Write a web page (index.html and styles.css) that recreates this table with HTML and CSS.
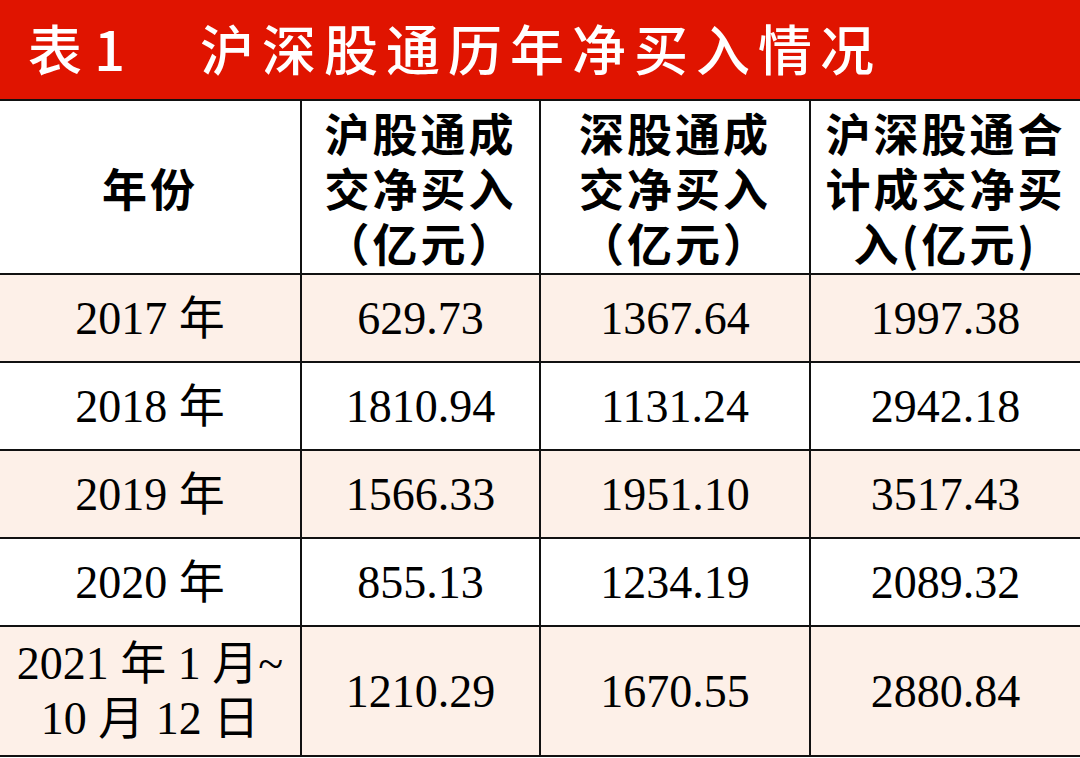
FILE: index.html
```html
<!DOCTYPE html>
<html lang="zh-CN">
<head>
    <meta charset="UTF-8">
    <meta name="viewport" content="width=device-width, initial-scale=1.0">
    <title>沪深股通历年净买入情况</title>
    <link rel="stylesheet" href="styles.css">
</head>
<body>
    <!-- Title bar -->
    <div class="title-bar">
        <span class="table-no">表 1</span>
        <span class="table-name">沪深股通历年净买入情况</span>
    </div>

    <table class="data-table">
        <colgroup>
            <col class="col-year">
            <col class="col-sh">
            <col class="col-sz">
            <col class="col-total">
        </colgroup>
        <thead>
            <tr>
                <th>年份</th>
                <th>沪股通成<br>交净买入<br>（亿元）</th>
                <th>深股通成<br>交净买入<br>（亿元）</th>
                <th>沪深股通合<br>计成交净买<br>入(亿元)</th>
            </tr>
        </thead>
        <tbody>
            <tr class="shade">
                <td>2017 年</td>
                <td>629.73</td>
                <td>1367.64</td>
                <td>1997.38</td>
            </tr>
            <tr>
                <td>2018 年</td>
                <td>1810.94</td>
                <td>1131.24</td>
                <td>2942.18</td>
            </tr>
            <tr class="shade">
                <td>2019 年</td>
                <td>1566.33</td>
                <td>1951.10</td>
                <td>3517.43</td>
            </tr>
            <tr>
                <td>2020 年</td>
                <td>855.13</td>
                <td>1234.19</td>
                <td>2089.32</td>
            </tr>
            <tr class="shade last">
                <td>2021 年 1 月~<br>10 月 12 日</td>
                <td>1210.29</td>
                <td>1670.55</td>
                <td>2880.84</td>
            </tr>
        </tbody>
    </table>
</body>
</html>
```

FILE: styles.css
```css
body {
    margin: 0;
    padding: 0;
    width: 1080px;
    background: #fff;
    overflow: hidden;
}

.title-bar {
    height: 99px;
    background: #e01400;
    color: #fff;
    display: flex;
    align-items: center;
    padding-left: 28px;
    padding-bottom: 3px;
    box-sizing: border-box;
    font-family: "Noto Sans CJK SC", sans-serif;
    font-weight: 500;
    font-size: 54px;
    line-height: 1;
}

.table-no {
    width: 172px;
}

.table-name {
    letter-spacing: 8px;
}

.data-table {
    width: 1080px;
    border-collapse: collapse;
    table-layout: fixed;
    color: #000;
}

.col-year {
    width: 301px;
}

.col-sh {
    width: 239px;
}

.col-sz {
    width: 270px;
}

.col-total {
    width: 270px;
}

th, td {
    border: 2px solid #111;
    text-align: center;
    vertical-align: middle;
    padding: 0;
}

th:first-child, td:first-child {
    border-left: none;
}

th:last-child, td:last-child {
    border-right: none;
}

th {
    height: 172px;
    font-family: "Noto Sans CJK SC", sans-serif;
    font-weight: bold;
    font-size: 45px;
    line-height: 55px;
    letter-spacing: 3px;
}

td {
    height: 86px;
    font-family: "Liberation Serif", "Noto Sans CJK SC", serif;
    font-size: 46px;
    line-height: 55px;
}

.shade td {
    background: #fdf0e8;
}

.last td {
    height: 128px;
}
```
